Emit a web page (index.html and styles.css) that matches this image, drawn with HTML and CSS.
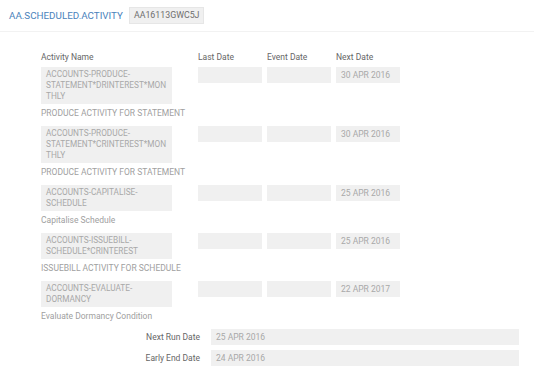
FILE: index.html
```html
<!DOCTYPE html>
<html lang="en">
<head>
    <meta charset="UTF-8">
    <meta name="viewport" content="width=device-width, initial-scale=1.0">
    <title>AA.SCHEDULED.ACTIVITY</title>
    <link rel="stylesheet" href="styles.css">
</head>
<body>
    <div class="header">
        <span class="title">AA.SCHEDULED.ACTIVITY</span>
        <span class="record-id">AA16113GWC5J</span>
    </div>
    <div class="content">
        <div class="row head">
            <div class="col-name">Activity Name</div>
            <div class="col-date">Last Date</div>
            <div class="col-date">Event Date</div>
            <div class="col-date">Next Date</div>
        </div>

        <div class="activity">
            <div class="row">
                <div class="col-name field name">ACCOUNTS-PRODUCE-STATEMENT*DRINTEREST*MONTHLY</div>
                <div class="col-date field"></div>
                <div class="col-date field"></div>
                <div class="col-date field">30 APR 2016</div>
            </div>
            <div class="desc">PRODUCE ACTIVITY FOR STATEMENT</div>
        </div>

        <div class="activity">
            <div class="row">
                <div class="col-name field name">ACCOUNTS-PRODUCE-STATEMENT*CRINTEREST*MONTHLY</div>
                <div class="col-date field"></div>
                <div class="col-date field"></div>
                <div class="col-date field">30 APR 2016</div>
            </div>
            <div class="desc">PRODUCE ACTIVITY FOR STATEMENT</div>
        </div>

        <div class="activity">
            <div class="row">
                <div class="col-name field name">ACCOUNTS-CAPITALISE-SCHEDULE</div>
                <div class="col-date field"></div>
                <div class="col-date field"></div>
                <div class="col-date field">25 APR 2016</div>
            </div>
            <div class="desc">Capitalise Schedule</div>
        </div>

        <div class="activity">
            <div class="row">
                <div class="col-name field name">ACCOUNTS-ISSUEBILL-SCHEDULE*CRINTEREST</div>
                <div class="col-date field"></div>
                <div class="col-date field"></div>
                <div class="col-date field">25 APR 2016</div>
            </div>
            <div class="desc">ISSUEBILL ACTIVITY FOR SCHEDULE</div>
        </div>

        <div class="activity">
            <div class="row">
                <div class="col-name field name">ACCOUNTS-EVALUATE-DORMANCY</div>
                <div class="col-date field"></div>
                <div class="col-date field"></div>
                <div class="col-date field">22 APR 2017</div>
            </div>
            <div class="desc">Evaluate Dormancy Condition</div>
        </div>

        <div class="summary">
            <div class="summary-row">
                <label>Next Run Date</label>
                <div class="field wide">25 APR 2016</div>
            </div>
            <div class="summary-row">
                <label>Early End Date</label>
                <div class="field wide">24 APR 2016</div>
            </div>
        </div>
    </div>
</body>
</html>
```

FILE: styles.css
```css
body {
    margin: 0;
    font-family: Roboto, "Liberation Sans", sans-serif;
    font-size: 8.5px;
    color: #666;
    background: #fff;
}
.header {
    display: flex;
    align-items: center;
    gap: 6px;
    height: 31px;
    padding-left: 9px;
    border-bottom: 1px solid #f2f2f2;
}
.title {
    color: #4a82bb;
    font-size: 9.8px;
}
.record-id {
    background: #f0f0f0;
    border: 1px solid #e6e6e6;
    color: #6e6e6e;
    font-size: 8.8px;
    height: 15px;
    line-height: 15px;
    padding: 0 4px;
}
.content {
    padding: 19px 15px 0 41px;
}
.row {
    display: flex;
    align-items: flex-start;
    gap: 5px;
}
.head {
    line-height: 12px;
    margin-bottom: 4px;
}
.col-name {
    width: 131px;
    margin-right: 21px;
}
.col-date {
    width: 64px;
}
.field {
    background: #f0f0f0;
    color: #a8a8a8;
    height: 16px;
    line-height: 16px;
    padding: 0 5px;
    box-sizing: border-box;
}
.field.name {
    height: auto;
    font-size: 8.25px;
    line-height: 11px;
    padding: 2px 2px 2px 5px;
    overflow-wrap: anywhere;
}
.desc {
    color: #a0a0a0;
    line-height: 12px;
    padding: 3px 0 7px;
}
.summary-row {
    display: flex;
    gap: 11px;
    margin-bottom: 5px;
}
.summary-row label {
    width: 159px;
    text-align: right;
    line-height: 16px;
    color: #666;
}
.field.wide {
    flex: 1;
}
```
